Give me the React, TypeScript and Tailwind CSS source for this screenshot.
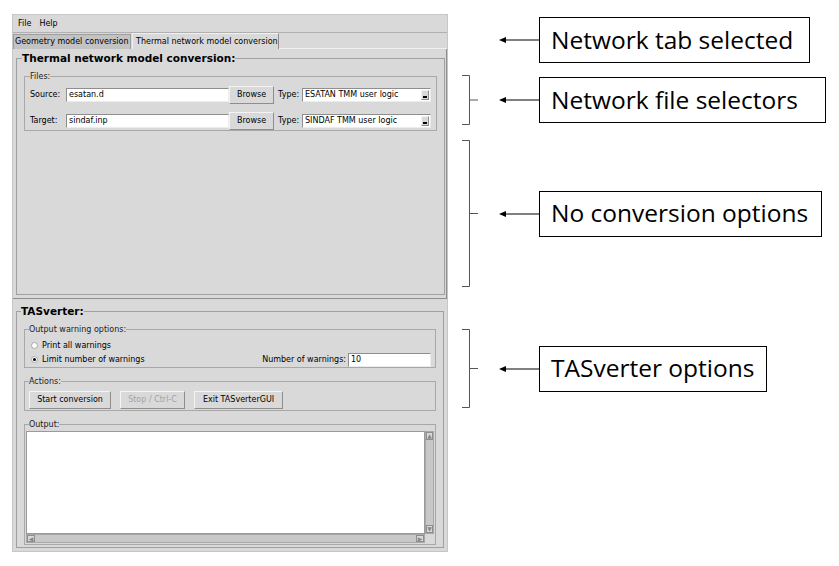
import React from 'react';

const ui = "font-['DejaVu_Sans',sans-serif] text-[8px] leading-none text-black whitespace-nowrap";

function Entry({ value, className }: { value: string; className: string }) {
  return (
    <div className={`h-[14px] bg-white border border-t-[#8e8e8e] border-l-[#8e8e8e] border-b-[#ececec] border-r-[#ececec] flex items-center pl-[2px] ${className}`}>
      {value}
    </div>
  );
}

function Button({ label, className, disabled }: { label: string; className: string; disabled?: boolean }) {
  return (
    <div className={`h-[18px] bg-[#d9d9d9] border border-t-[#f4f4f4] border-l-[#f4f4f4] border-b-[#8e8e8e] border-r-[#8e8e8e] flex items-center justify-center ${disabled ? 'text-[#a3a3a3]' : ''} ${className}`}>
      {label}
    </div>
  );
}

function Combo({ value }: { value: string }) {
  return (
    <div className="h-[14px] w-[129px] bg-white border border-t-[#8e8e8e] border-l-[#8e8e8e] border-b-[#ececec] border-r-[#ececec] flex items-center pl-[2px]">
      <span className="flex-1">{value}</span>
      <div className="w-[8px] h-[10px] mr-[1px] bg-[#d9d9d9] border border-t-[#f4f4f4] border-l-[#f4f4f4] border-b-[#8e8e8e] border-r-[#8e8e8e] flex items-end justify-center pb-[1px]">
        <div className="w-[4px] h-[2px] bg-black" />
      </div>
    </div>
  );
}

function Radio({ checked, label }: { checked?: boolean; label: string }) {
  return (
    <div className="flex items-center h-[14px]">
      <div className="ml-[5px] w-[7px] h-[7px] rounded-full bg-white border border-[#a8a8a8] flex items-center justify-center">
        {checked && <div className="w-[3px] h-[3px] rounded-full bg-black" />}
      </div>
      <span className="ml-[4px]">{label}</span>
    </div>
  );
}

function Bracket({ h }: { h: number }) {
  return (
    <svg width="38" height={h} className="shrink-0">
      <path d={`M2 0.5 H9.5 V${h - 0.5} H2 M9.5 ${h / 2} H18`} fill="none" stroke="#555" strokeWidth="1" />
    </svg>
  );
}

function Arrow() {
  return (
    <svg width="41" height="10" className="shrink-0">
      <path d="M6 5 H41" stroke="black" strokeWidth="1" />
      <path d="M1 5 L8 2 L8 8 Z" fill="black" />
    </svg>
  );
}

function Callout({ text, w }: { text: string; w: string }) {
  return (
    <div className={`h-[46px] ${w} border border-black bg-white flex items-center pl-[11px] font-['Open_Sans',sans-serif] text-[24.5px] text-black whitespace-nowrap`}>
      {text}
    </div>
  );
}

export default function App() {
  return (
    <div className="w-[839px] h-[566px] bg-white flex overflow-hidden">
      {/* Tk window */}
      <div className={`ml-[12px] mt-[14px] w-[436px] h-[538px] bg-[#d9d9d9] border border-[#c6c6c6] flex flex-col ${ui}`}>
        <div className="h-[18px] flex items-center gap-[8px] pl-[5px] border-b border-[#b0b0b0]">
          <span>File</span>
          <span>Help</span>
        </div>
        <div className="h-[16px] flex items-end">
          <div className="h-[15px] w-[118px] bg-[#c3c3c3] border border-[#9e9e9e] border-b-0 flex items-center pl-[1px]">Geometry model conversion</div>
          <div className="h-[16px] w-[147px] ml-[1px] bg-[#d9d9d9] border border-[#f0f0f0] border-r-[#8e8e8e] border-b-0 flex items-center pl-[3px]">Thermal network model conversion</div>
          <div className="flex-1 h-[1px] bg-[#f0f0f0]" />
        </div>
        {/* notebook pane */}
        <div className="h-[250px] border-r border-b border-[#8e8e8e] px-[3px] pt-[4px]">
          <fieldset className="h-[242px] border border-[#a0a0a0] px-[7px]">
            <legend className="-ml-[2px] font-bold text-[10.5px]">Thermal network model conversion:</legend>
            <fieldset className="mt-[9px] h-[58px] border border-[#a8a8a8] px-[5px]">
              <legend className="text-[#222]">Files:</legend>
              <div className="flex items-center h-[17px] mt-[6px]">
                <span className="w-[36px]">Source:</span>
                <Entry value="esatan.d" className="w-[163px]" />
                <Button label="Browse" className="w-[45px] h-[17px]" />
                <span className="ml-[4px] w-[24px]">Type:</span>
                <Combo value="ESATAN TMM user logic" />
              </div>
              <div className="flex items-center h-[17px] mt-[9px]">
                <span className="w-[36px]">Target:</span>
                <Entry value="sindaf.inp" className="w-[163px]" />
                <Button label="Browse" className="w-[45px] h-[17px]" />
                <span className="ml-[4px] w-[24px]">Type:</span>
                <Combo value="SINDAF TMM user logic" />
              </div>
            </fieldset>
          </fieldset>
        </div>
        {/* TASverter */}
        <div className="flex-1 px-[3px] pt-[7px] pb-[3px] flex flex-col">
          <fieldset className="flex-1 border border-[#a0a0a0] px-[7px] pb-[2px] flex flex-col">
            <legend className="-ml-[3px] font-bold text-[10.5px]">TASverter:</legend>
            <fieldset className="mt-[9px] h-[42px] border border-[#a8a8a8] px-[1px]">
              <legend className="ml-[3px] text-[#222]">Output warning options:</legend>
              <div className="mt-[5px]">
                <Radio label="Print all warnings" />
                <div className="flex items-center">
                  <div className="flex-1"><Radio checked label="Limit number of warnings" /></div>
                  <span className="mr-[2px]">Number of warnings:</span>
                  <Entry value="10" className="w-[83px] mr-[3px]" />
                </div>
              </div>
            </fieldset>
            <fieldset className="mt-[10px] h-[33px] border border-[#a8a8a8] px-[4px]">
              <legend className="text-[#222]">Actions:</legend>
              <div className="flex mt-[5px] gap-[9px]">
                <Button label="Start conversion" className="w-[82px]" />
                <Button label="Stop / Ctrl-C" className="w-[65px]" disabled />
                <Button label="Exit TASverterGUI" className="w-[89px]" />
              </div>
            </fieldset>
            <fieldset className="mt-[10px] flex-1 border border-[#a8a8a8] px-[1px] pb-[1px] flex flex-col">
              <legend className="ml-[3px] text-[#222]">Output:</legend>
              <div className="flex-1 mt-[2px] flex flex-col">
                <div className="flex-1 flex">
                  <div className="flex-1 bg-white border border-[#9a9a9a]" />
                  <div className="w-[9px] bg-[#c8c8c8] border border-[#a8a8a8] flex flex-col justify-between">
                    <div className="h-[8px] bg-[#d9d9d9] border border-[#8e8e8e] flex items-center justify-center text-[6px] text-[#888]">▲</div>
                    <div className="h-[8px] bg-[#d9d9d9] border border-[#8e8e8e] flex items-center justify-center text-[6px] text-[#888]">▼</div>
                  </div>
                </div>
                <div className="h-[9px] flex">
                  <div className="flex-1 bg-[#c8c8c8] border border-[#a8a8a8] flex justify-between">
                    <div className="w-[8px] bg-[#d9d9d9] border border-[#8e8e8e] flex items-center justify-center text-[6px] text-[#888]">◀</div>
                    <div className="w-[8px] bg-[#d9d9d9] border border-[#8e8e8e] flex items-center justify-center text-[6px] text-[#888]">▶</div>
                  </div>
                  <div className="w-[9px]" />
                </div>
              </div>
            </fieldset>
          </fieldset>
        </div>
      </div>

      {/* annotations */}
      <div className="ml-[12px] flex flex-col">
        <div className="mt-[17px] h-[46px] flex items-center">
          <div className="w-[38px]" />
          <Arrow />
          <Callout text="Network tab selected" w="w-[271px]" />
        </div>
        <div className="mt-[12px] h-[50px] flex items-center">
          <Bracket h={50} />
          <Arrow />
          <Callout text="Network file selectors" w="w-[287px]" />
        </div>
        <div className="mt-[15px] h-[147px] flex items-center">
          <Bracket h={147} />
          <Arrow />
          <Callout text="No conversion options" w="w-[283px]" />
        </div>
        <div className="mt-[42px] h-[79px] flex items-center">
          <Bracket h={79} />
          <Arrow />
          <Callout text="TASverter options" w="w-[228px]" />
        </div>
      </div>
    </div>
  );
}
